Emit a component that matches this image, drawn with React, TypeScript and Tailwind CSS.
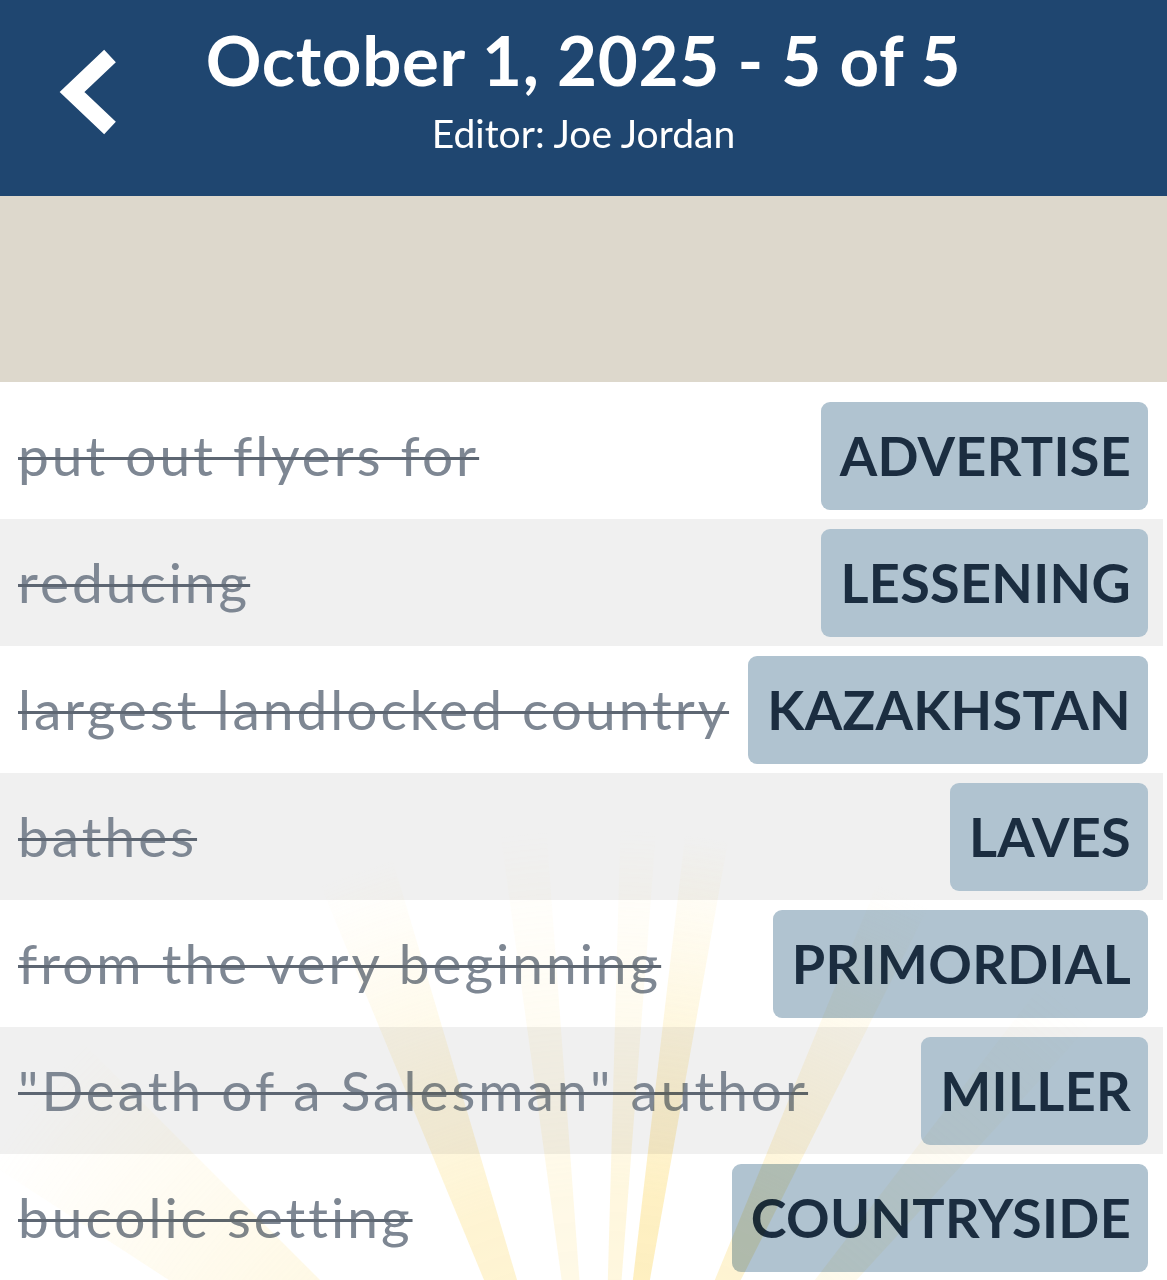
import React from 'react'

const ROWS = [
  { clue: 'put out flyers for', answer: 'ADVERTISE' },
  { clue: 'reducing', answer: 'LESSENING' },
  { clue: 'largest landlocked country', answer: 'KAZAKHSTAN' },
  { clue: 'bathes', answer: 'LAVES' },
  { clue: 'from the very beginning', answer: 'PRIMORDIAL' },
  { clue: '"Death of a Salesman" author', answer: 'MILLER' },
  { clue: 'bucolic setting', answer: 'COUNTRYSIDE' },
]

// sun rays: angle from vertical (deg), half width (deg), strength
const RAYS = [
  { a: -51, w: 6, o: 0.35 },
  { a: -19.5, w: 3, o: 0.55 },
  { a: -6, w: 1.8, o: 0.3 },
  { a: 3, w: 1.4, o: 0.4 },
  { a: 8.4, w: 1.7, o: 0.75 },
  { a: 24.5, w: 2.2, o: 0.55 },
  { a: 40, w: 2.5, o: 0.25 },
]

function SunRays() {
  const cx = 600
  const cy = 1560
  const len = 730
  const rad = (d: number) => (d * Math.PI) / 180
  return (
    <svg className="pointer-events-none absolute left-0 top-0" width="1167" height="1280" viewBox="0 0 1167 1280">
      <defs>
        <radialGradient id="ray" cx={cx} cy={cy} r={len} gradientUnits="userSpaceOnUse">
          <stop offset="0%" stopColor="#fde7a0" stopOpacity="1" />
          <stop offset="50%" stopColor="#fde7a0" stopOpacity="0.85" />
          <stop offset="100%" stopColor="#fde7a0" stopOpacity="0" />
        </radialGradient>
      </defs>
      {RAYS.map((r, i) => {
        const a1 = rad(r.a - r.w)
        const a2 = rad(r.a + r.w)
        const p1 = `${cx + Math.sin(a1) * len},${cy - Math.cos(a1) * len}`
        const p2 = `${cx + Math.sin(a2) * len},${cy - Math.cos(a2) * len}`
        return <polygon key={i} points={`${cx},${cy} ${p1} ${p2}`} fill="url(#ray)" opacity={r.o} style={{ mixBlendMode: 'multiply' }} />
      })}
    </svg>
  )
}

export default function App() {
  return (
    <div className="relative w-[1167px] h-[1280px] overflow-hidden bg-white" style={{ fontFamily: 'Lato, "Open Sans", sans-serif' }}>
      {/* Header */}
      <div className="grid grid-cols-[1fr_auto_1fr] items-start h-[196px] bg-[#1f4670] text-white">
        <div className="pl-[58px] pt-[48px]">
          <svg width="64" height="88" viewBox="0 0 64 88">
            <path d="M52 8 L14 44 L52 80" fill="none" stroke="white" strokeWidth="17" strokeLinejoin="miter" />
          </svg>
        </div>
        <div className="flex flex-col items-center pt-[19px]">
          <div className="text-[69px] font-bold leading-[82px] tracking-[0.7px]">October 1, 2025 - 5 of 5</div>
          <div className="text-[39px] leading-[46px] mt-[9px]">Editor: Joe Jordan</div>
        </div>
        <div />
      </div>

      {/* Beige band */}
      <div className="h-[186px] bg-[#ddd8cc]" />

      {/* Word list */}
      <div className="pt-[10px] pr-[4px]">
        {ROWS.map((r, i) => (
          <div
            key={r.answer}
            className={`flex h-[127px] items-center justify-between pl-[18px] pr-[15px] ${i % 2 === 1 ? 'bg-[#f0f0f0]' : 'bg-white'}`}
          >
            <span className="text-[55px] leading-none tracking-[3px] text-[#7e8793] line-through decoration-[#5d6672] decoration-[3px] whitespace-nowrap">
              {r.clue}
            </span>
            <span className="flex h-[108px] items-center rounded-[9px] bg-[#b0c3d0] pl-[19px] pr-[17px] text-[54px] font-bold tracking-[0.3px] text-[#1b2d40] leading-none">
              {r.answer}
            </span>
          </div>
        ))}
      </div>

      <SunRays />
    </div>
  )
}
